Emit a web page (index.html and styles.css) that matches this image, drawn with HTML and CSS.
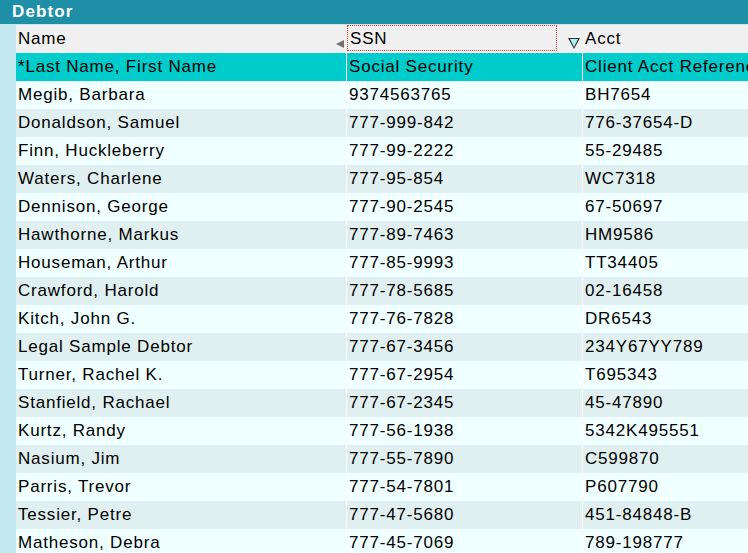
FILE: index.html
```html
<!DOCTYPE html>
<html lang="en">
<head>
    <meta charset="UTF-8">
    <meta name="viewport" content="width=device-width, initial-scale=1.0">
    <link rel="stylesheet" href="styles.css">
    <title>Debtor</title>
</head>
<body>
    <div class="titlebar">Debtor</div>
    <div class="sep"></div>
    <div class="frame">
        <div class="strip"></div>
        <div class="grid" id="grid">
            <div class="head c1">Name<span class="arrow-left"></span></div>
            <div class="head c2"><span class="focus">SSN</span><span class="arrow-down"></span></div>
            <div class="head c3">Acct</div>

            <div class="sub c1">*Last Name, First Name</div>
            <div class="sub c2">Social Security</div>
            <div class="sub c3">Client Acct Reference</div>
        </div>
    </div>
    <script>
        var rows = [
            ["Megib, Barbara", "9374563765", "BH7654"],
            ["Donaldson, Samuel", "777-999-842", "776-37654-D"],
            ["Finn, Huckleberry", "777-99-2222", "55-29485"],
            ["Waters, Charlene", "777-95-854", "WC7318"],
            ["Dennison, George", "777-90-2545", "67-50697"],
            ["Hawthorne, Markus", "777-89-7463", "HM9586"],
            ["Houseman, Arthur", "777-85-9993", "TT34405"],
            ["Crawford, Harold", "777-78-5685", "02-16458"],
            ["Kitch, John G.", "777-76-7828", "DR6543"],
            ["Legal Sample Debtor", "777-67-3456", "234Y67YY789"],
            ["Turner, Rachel K.", "777-67-2954", "T695343"],
            ["Stanfield, Rachael", "777-67-2345", "45-47890"],
            ["Kurtz, Randy", "777-56-1938", "5342K495551"],
            ["Nasium, Jim", "777-55-7890", "C599870"],
            ["Parris, Trevor", "777-54-7801", "P607790"],
            ["Tessier, Petre", "777-47-5680", "451-84848-B"],
            ["Matheson, Debra", "777-45-7069", "789-198777"]
        ];
        var grid = document.getElementById("grid");
        rows.forEach(function(r, i) {
            r.forEach(function(text, j) {
                var cell = document.createElement("div");
                cell.className = "cell c" + (j + 1) + (i % 2 ? " alt" : "");
                cell.textContent = text;
                grid.appendChild(cell);
            });
        });
    </script>
</body>
</html>
```

FILE: styles.css
```css
body {
    margin: 0;
    width: 748px;
    height: 553px;
    overflow: hidden;
    background-color: #f0ffff;
    font-family: "Liberation Sans", Arial, sans-serif;
    font-size: 17px;
    letter-spacing: 0.8px;
    color: #000000;
}
.titlebar {
    height: 24px;
    line-height: 24px;
    padding-left: 12px;
    background-color: #1e8fa6;
    color: #ffffff;
    font-weight: bold;
    font-size: 17px;
    letter-spacing: 1.1px;
}
.sep {
    height: 1px;
    background-color: #c4e8f0;
}
.frame {
    display: flex;
}
.strip {
    width: 16px;
    flex-shrink: 0;
    background-color: #c4e8f0;
}
.grid {
    display: grid;
    grid-template-columns: 331px 236px 200px;
    grid-auto-rows: 28px;
}
.grid > div {
    line-height: 28px;
    padding-left: 2px;
    white-space: nowrap;
    overflow: hidden;
    border-right: 1px solid #ffffff;
}
.head {
    position: relative;
    background-color: #f0f0f0;
    height: 27px;
    line-height: 27px !important;
}
.grid > .head {
    border-right: 1px solid #f0f0f0;
}
.head.c2 {
    padding-left: 0;
}
.focus {
    display: inline-block;
    box-sizing: border-box;
    width: 210px;
    height: 26px;
    padding-left: 2px;
    border: 1px dotted #ff3030;
    line-height: 26px;
}
.arrow-left {
    position: absolute;
    right: 2px;
    top: 15px;
    width: 0;
    height: 0;
    border-top: 4px solid transparent;
    border-bottom: 4px solid transparent;
    border-right: 8px solid #707070;
}
.arrow-down {
    position: absolute;
    right: 2px;
    top: 13px;
    width: 0;
    height: 0;
    border-left: 6px solid transparent;
    border-right: 6px solid transparent;
    border-top: 11px solid #303030;
}
.arrow-down::after {
    content: "";
    position: absolute;
    left: -4px;
    top: -10px;
    border-left: 4px solid transparent;
    border-right: 4px solid transparent;
    border-top: 8px solid #a8f0f0;
}
.sub {
    background-color: #00cccc;
}
.cell {
    background-color: #f0ffff;
}
.cell.alt {
    background-color: #e0f0f0;
}
```
